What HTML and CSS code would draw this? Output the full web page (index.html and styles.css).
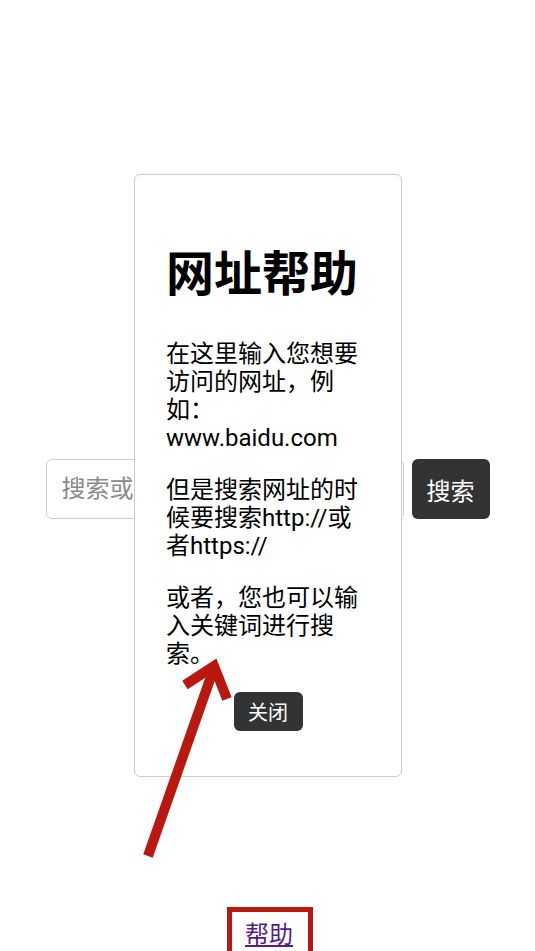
FILE: index.html
```html
<!DOCTYPE html>
<html lang="zh-CN">
<head>
    <meta charset="UTF-8">
    <title>网址帮助</title>
    <link rel="stylesheet" href="styles.css">
</head>
<body>
<div class="page">
    <div class="search">
        <input class="search-input" type="text" placeholder="搜索或输入网址">
        <button class="search-btn">搜索</button>
    </div>
    <div class="help">
        <span class="help-box"><a href="#" class="help-link">帮助</a></span>
    </div>
</div>

<div class="dialog">
    <h1>网址帮助</h1>
    <p>在这里输入您想要访问的网址，例如：www.baidu.com</p>
    <p>但是搜索网址的时候要搜索http://或者https://</p>
    <p>或者，您也可以输入关键词进行搜索。</p>
    <div class="dialog-actions">
        <button class="close-btn">关闭</button>
    </div>
</div>

<!-- 标注箭头 -->
<svg class="mark" width="535" height="951" viewBox="0 0 535 951">
    <polyline points="148,856 214,668" fill="none" stroke="#b8180d" stroke-width="10"/>
    <polyline points="185,685 214,666 227,699" fill="none" stroke="#b8180d" stroke-width="10" stroke-linejoin="miter"/>
</svg>
</body>
</html>
```

FILE: styles.css
```css
*{
    padding: 0;
    margin: 0;
    box-sizing: border-box;
}
body{
    font-family: Roboto, "Noto Sans CJK SC", sans-serif;
    font-size: 24px;
    line-height: 28px;
    color: #000;
    background: #fff;
}
.page{
    width: 535px;
    height: 951px;
    overflow: hidden;
}
.search{
    display: flex;
    justify-content: center;
    gap: 8px;
    margin-top: 459px;
}
.search-input{
    width: 358px;
    height: 60px;
    border: 1px solid #ccc;
    border-radius: 6px;
    padding: 0 15px;
    font-family: inherit;
    font-size: 24px;
    color: #000;
    outline: none;
}
.search-input::placeholder{
    color: #8a8a8a;
}
.search-btn{
    width: 78px;
    height: 60px;
    border: none;
    border-radius: 6px;
    background-color: #333;
    color: #fff;
    font-family: inherit;
    font-size: 24px;
}
.help{
    margin-top: 388px;
    text-align: center;
}
.help-box{
    display: inline-block;
    border: 5px solid #b8180d;
    padding: 9px 15px 20px 13px;
    margin-left: 5px;
}
.help-link{
    color: #551a8b;
    text-decoration: underline;
}
.dialog{
    position: absolute;
    left: 134px;
    top: 174px;
    width: 268px;
    height: 603px;
    border: 1px solid #ccc;
    border-radius: 6px;
    background-color: #fff;
    padding: 0 31px;
}
.dialog h1{
    font-size: 48px;
    line-height: 56px;
    font-weight: bold;
    margin: 72px 0 37px;
}
.dialog p{
    margin-bottom: 24px;
}
.dialog-actions{
    display: flex;
    justify-content: center;
}
.close-btn{
    width: 69px;
    height: 39px;
    border: none;
    border-radius: 6px;
    background-color: #333;
    color: #fff;
    font-family: inherit;
    font-size: 20px;
}
.mark{
    position: absolute;
    left: 0;
    top: 0;
    pointer-events: none;
}
```
